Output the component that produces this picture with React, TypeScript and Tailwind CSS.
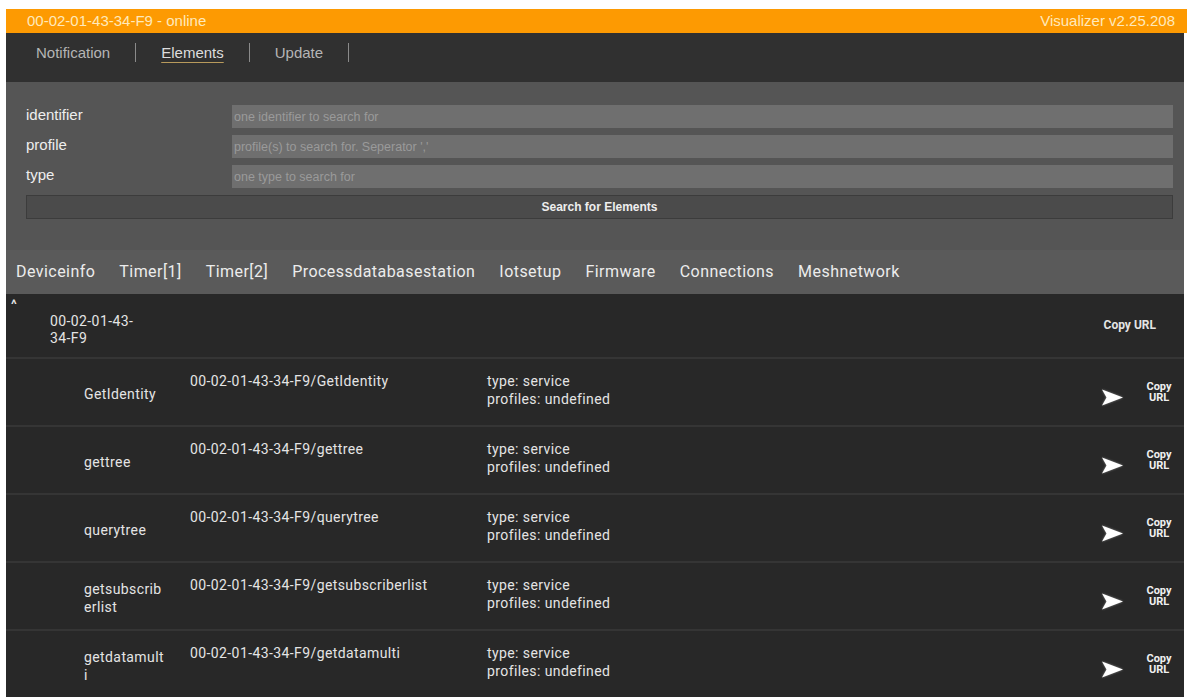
import React from 'react';

const device = '00-02-01-43-34-F9';

const services = ['GetIdentity', 'gettree', 'querytree', 'getsubscriberlist', 'getdatamulti'];

const tabs = [
  'Deviceinfo',
  'Timer[1]',
  'Timer[2]',
  'Processdatabasestation',
  'Iotsetup',
  'Firmware',
  'Connections',
  'Meshnetwork',
];

function SendArrow() {
  return (
    <svg width="23" height="19" viewBox="0 0 23 19" className="drop-shadow-[0_0_1px_rgba(255,255,255,0.4)]">
      <path d="M1 1.5 L22 9.5 L1 17.5 L5.5 9.5 Z" fill="#ffffff" />
    </svg>
  );
}

function SearchField({ label, placeholder }: { label: string; placeholder: string }) {
  return (
    <div className="flex items-center h-[23px]">
      <label className="w-[206px] text-[15px] leading-[18px] -mt-[4px] text-[#eeeeee]">{label}</label>
      <input
        placeholder={placeholder}
        className="flex-1 h-[23px] bg-[#6f6f6f] px-[2px] text-[12.5px] text-[#ddd] placeholder:text-[#9a9a9a] outline-none"
      />
    </div>
  );
}

function ServiceRow({ name }: { name: string }) {
  return (
    <div className="flex items-stretch h-[68px] border-t-2 border-[#353535] pl-[78px] pr-[7px] text-[14px] tracking-[0.4px] leading-[18px] text-[#e4e4e4]">
      <div className="w-[106px] flex items-center pt-[4px]">
        <span className="w-[81px] break-all">{name}</span>
      </div>
      <div className="w-[297px] pt-[13px]">
        {device}/{name}
      </div>
      <div className="flex-1 pt-[13px] leading-[18px]">
        <div>type: service</div>
        <div>profiles: undefined</div>
      </div>
      <div className="flex items-center pt-[10px] pr-[17px]">
        <SendArrow />
      </div>
      <div className="flex flex-col items-center justify-center w-[36px] text-[11px] leading-[11px] tracking-normal font-bold text-[#f0f0f0]">
        <span>Copy</span>
        <span>URL</span>
      </div>
    </div>
  );
}

export default function App() {
  return (
    <div className="h-[698px] overflow-hidden bg-white pt-[9px] pl-[6px] pr-[6px]" style={{ fontFamily: '"Liberation Sans", Arial, sans-serif' }}>
      {/* status bar */}
      <div className="flex items-center justify-between h-[24px] bg-[#fd9a02] pl-[21px] pr-[12px] text-[15px] text-[#ffe9bb]">
        <span>{device} - online</span>
        <span>Visualizer v2.25.208</span>
      </div>

      {/* main navigation */}
      <nav className="flex items-start h-[49px] bg-[#303030] pl-[5px] pt-[10px] mr-[3px] text-[15px] text-[#b5b5b5]">
        {['Notification', 'Elements', 'Update'].map((item) => (
          <span
            key={item}
            className={
              'px-[25px] border-r border-[#8a8a8a] leading-[19px] ' +
              (item === 'Elements' ? 'text-[#dddddd] underline underline-offset-[4px] decoration-[#b89a5c]' : '')
            }
          >
            {item}
          </span>
        ))}
      </nav>

      {/* element search */}
      <div className="bg-[#555555] pt-[23px] pb-[31px] pl-[20px] pr-[11px] mr-[3px] flex flex-col gap-[7px]">
        <SearchField label="identifier" placeholder="one identifier to search for" />
        <SearchField label="profile" placeholder="profile(s) to search for. Seperator ','" />
        <SearchField label="type" placeholder="one type to search for" />
        <button className="h-[24px] bg-[#4b4b4b] border border-[#3c3c3c] text-[12px] font-bold text-[#eeeeee]">
          Search for Elements
        </button>
      </div>

      <div style={{ fontFamily: 'Roboto, "Liberation Sans", sans-serif' }} className="mr-[3px]">
        {/* profile tabs */}
        <div className="flex items-center h-[44px] bg-[#5a5a5a] pl-[10px] gap-[24px] text-[16px] tracking-[0.45px] text-[#ececec]">
          {tabs.map((t) => (
            <span key={t}>{t}</span>
          ))}
        </div>

        {/* element tree */}
        <div className="bg-[#282828]">
          <div className="flex h-[63px] pr-[28px] text-[14px] tracking-[0.4px] leading-[17px] text-[#e4e4e4]">
            <span className="w-[44px] pl-[5px] pt-[2px] text-[13px] font-bold">^</span>
            <div className="flex-1 flex items-center pt-[9px]">
              <span>00-02-01-43-<br />34-F9</span>
            </div>
            <div className="flex items-center text-[12px] tracking-normal font-bold">Copy URL</div>
          </div>
          {services.map((s) => (
            <ServiceRow key={s} name={s} />
          ))}
        </div>
      </div>
    </div>
  );
}
